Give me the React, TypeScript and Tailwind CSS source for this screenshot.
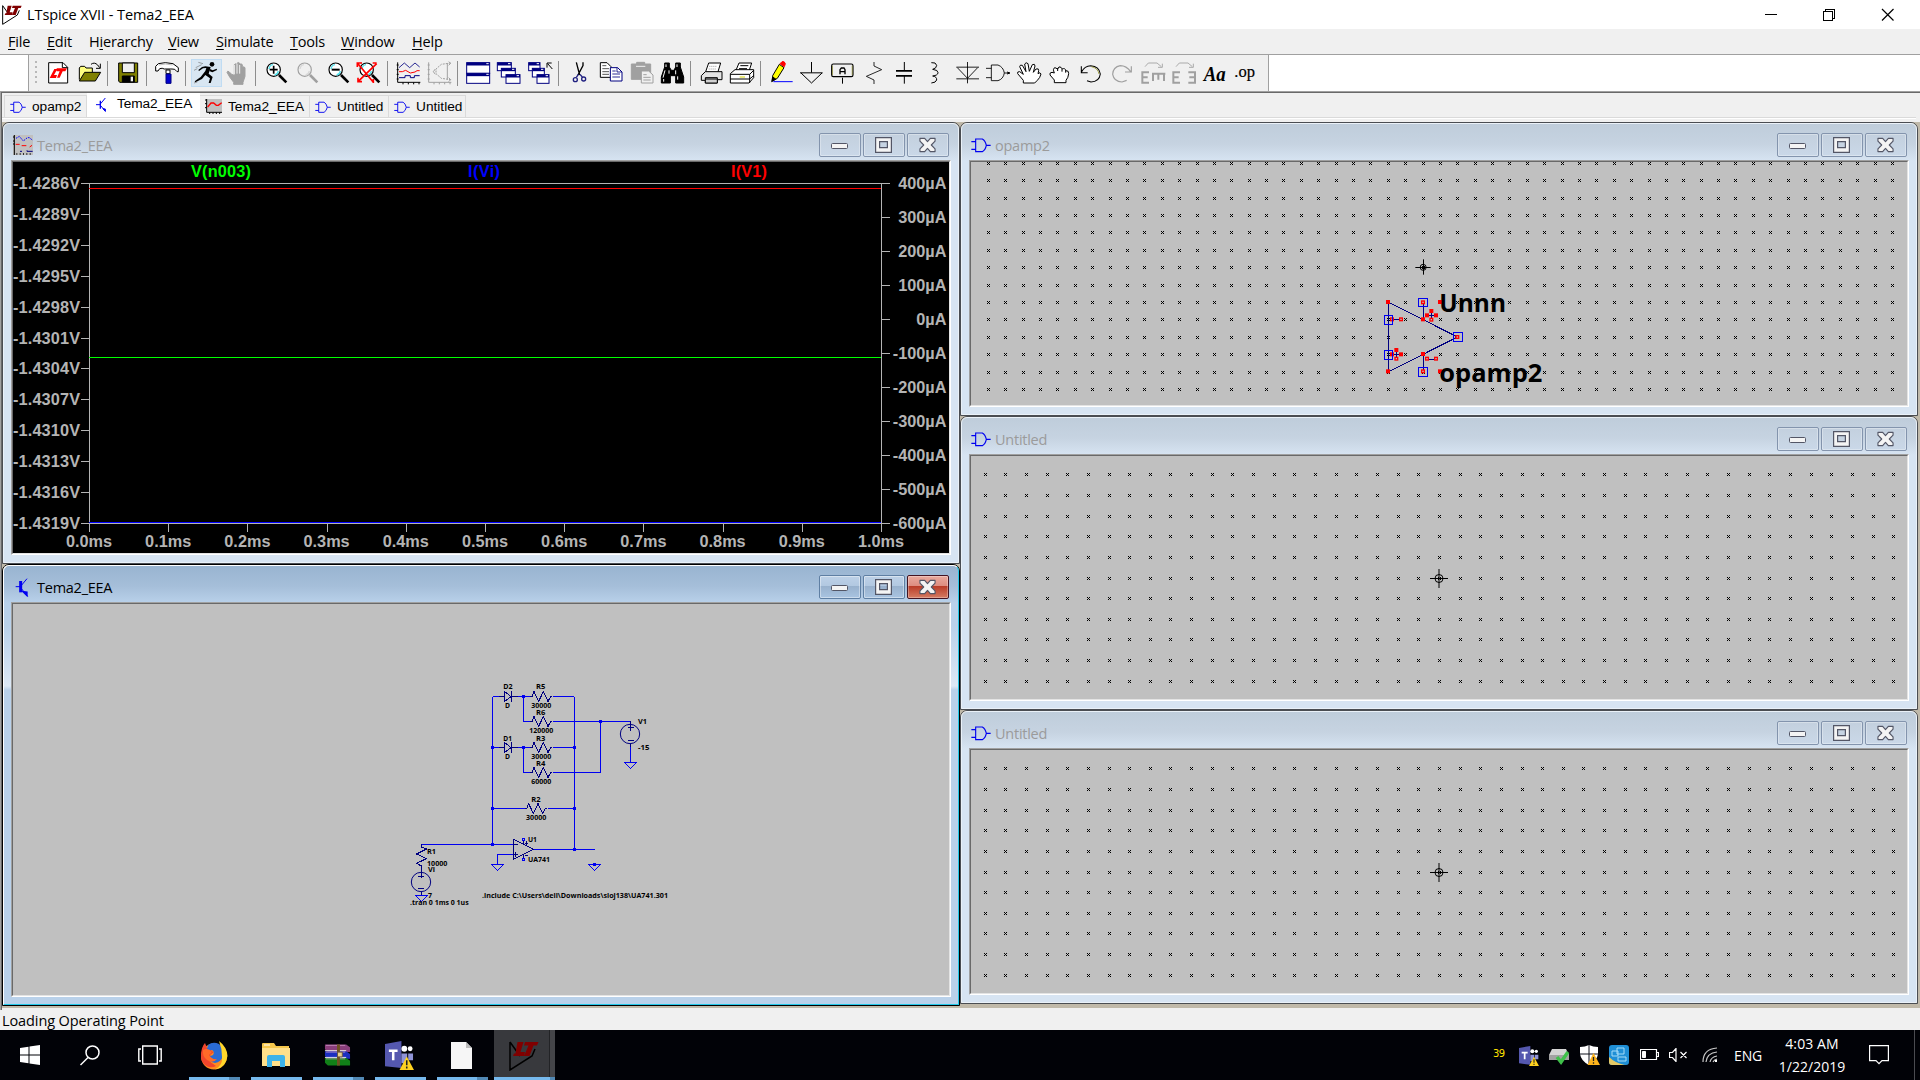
import React from "react";

type Kids = { children?: React.ReactNode };

/* ---------- toolbar ---------- */

const Btn = ({ children, hot }: Kids & { hot?: boolean }) => (
  <div className={hot ? "h-7 w-[31px] shrink-0 bg-[#d8e6f2] outline outline-1 -outline-offset-1 outline-[#c0dcf3]" : "h-7 w-[31px] shrink-0"}>
    <svg width="31" height="28" viewBox="0 0 93 84" fill="none" stroke="#000" strokeWidth="3">
      {children}
    </svg>
  </div>
);

const Sep = () => (
  <div className="h-7 w-2 shrink-0 pl-0.5 pt-0.5">
    <div className="h-[25px] w-px bg-[#8d8d8d]" />
  </div>
);

const Mag = ({ c = "#000", glass = "#fff", children }: Kids & { c?: string; glass?: string }) => (
  <>
    <circle cx="38" cy="32" r="20" stroke={c} fill={glass} strokeWidth="3.500" />
    <path d="M24 30q2-12 12-13M52 36q-2 10-11 12" stroke={c === "#000" ? "#4fe3ee" : "#d8d8d8"} strokeWidth="4" />
    <path d="M54 48L76 70" stroke={c} strokeWidth="8" />
    {children}
  </>
);

const MiniWin = ({ x, y, w = 45, h = 32 }: { x: number; y: number; w?: number; h?: number }) => (
  <g stroke="#000080">
    <rect x={x} y={y} width={w} height={h} fill="#fff" />
    <path d={`M${x} ${y + 4}h${w}`} strokeWidth="9" />
    <path d={`M${x + w - 10} ${y + 3}h7`} stroke="#fff" />
  </g>
);

const HandPath = "M27 46l-8-8q-5-3-6 2l8 14 12 16v6h28v-6l6-18V26q-4-5-8 0v14V17q-4-5-8 0v22V13q-4-5-8 0v26V17q-4-5-8 0v32z";

const Toolbar = () => (
  <div className="flex h-[37px] border-t border-[#a0a0a0] bg-white">
    <div className="ml-7 flex h-9 w-[1241px] items-start border-x border-[#a0a0a0] bg-[#f0f0f0] pt-1">
      <div className="flex h-7 w-[14px] shrink-0 flex-col gap-[3px] pl-[6px] pt-0.5">
        {[0, 1, 2, 3, 4].map((i) => (
          <div key={i} className="size-0.5 bg-[#b8b8b8]" />
        ))}
      </div>
      <Btn>
        <path d="M17 11h43l14 14v47H17z" fill="#fff" />
        <path d="M58 11v15h16" />
        <path d="M20 57l14-27h9l-10 18h9l-3 9zM41 28h31l-5 9h-8l-9 19h-8l8-19h-9z" fill="#f00" stroke="none" />
      </Btn>
      <Btn>
        <path d="M16 62V27l4-5h12l4 5h19v12" fill="#ffff80" />
        <path d="M16 66l16-26h48L64 66z" fill="#808000" />
        <path d="M51 16q10-8 20 2l6 8M79 14v14H66" />
      </Btn>
      <Sep />
      <Btn>
        <path d="M17 12h57v58H20l-3-4z" fill="#808000" />
        <path d="M28 12h36v29H28z" fill="#f0f0f0" />
        <path d="M28 51h36v18H28z" fill="#000" />
        <path d="M53 53h7v14h-7z" fill="#f0f0f0" stroke="none" />
      </Btn>
      <Sep />
      <Btn>
        <path d="M11 36V22l8-8q20-6 44 0l16 12v12h-4q-6-10-15-8H37q-6-4-14-1l-5 7z" fill="#fff" />
        <path d="M20 18q20-6 42 0" stroke="#c0c0c0" />
        <path d="M42 33h12v11H42z" fill="#fff" />
        <path d="M42 45h15v28H42z" fill="#0000d0" stroke="#000080" />
      </Btn>
      <Sep />
      <Btn hot>
        <g stroke="none" fill="#000">
          <circle cx="63" cy="16" r="7" />
          <path d="M43 22l16 2-6 20 12 10-6 18h-6l4-14-14-10-10 12-20 10-2-3 18-13 14-18 3-9-10 1-12 8-2-3 11-9z" />
          <path d="M57 30l8 4 12-5 1 4-14 7-9-4z" />
        </g>
        <path d="M22 10l14 4M14 26l18-9M9 34l10-5M9 72l10-3" stroke="#777" strokeWidth="2" />
      </Btn>
      <Btn>
        <g transform="translate(2 0)">
          <path d={HandPath} fill="#a0a0a0" stroke="#a0a0a0" />
          <path d="M35 18v28M43 14v30M51 18v26" stroke="#f0f0f0" />
        </g>
      </Btn>
      <Sep />
      <Btn>
        <Mag><path d="M26 32h24M38 20v24" strokeWidth="5" /></Mag>
      </Btn>
      <Btn>
        <Mag c="#a0a0a0" glass="#f0f0f0" />
      </Btn>
      <Btn>
        <Mag><path d="M26 32h24" strokeWidth="6" /></Mag>
      </Btn>
      <Btn>
        <Mag />
        <path d="M10 12l48 58M68 14L12 68M10 24V12h14M56 12h12M12 56v12h12M58 60v12" stroke="#f00" strokeWidth="5" />
      </Btn>
      <Sep />
      <Btn>
        <path d="M14 10v60h68M11 18h6M11 32h6M11 46h6M11 60h6M30 70v6M46 70v6M62 70v6M78 70v6" />
        <path d="M18 26l16-14 16 14 16-14 14 12" stroke="#000080" strokeWidth="2.5" />
        <path d="M18 38h10l10-4 14 8 14-3 6-4h8" stroke="#f00" />
        <path d="M18 56h18v-6h16v6h12v-6h16" stroke="#000080" />
      </Btn>
      <Btn>
        <g stroke="#a0a0a0">
          <path d="M14 10v60h68M11 18h6M11 32h6M11 46h6M11 60h6M30 70v6M46 70v6M62 70v6M78 70v6" />
          <path d="M80 12L52 16 36 30v14l16 14 28 4" strokeDasharray="6 3" />
          <path d="M70 12v50M34 30l-6 8 6 8M74 8l6 5-6 6M74 56l6 6-6 6" />
        </g>
      </Btn>
      <Sep />
      <Btn>
        <MiniWin x={11} y={11} w={69} h={32} />
        <MiniWin x={11} y={43} w={69} h={30} />
      </Btn>
      <Btn>
        <MiniWin x={10} y={11} w={42} h={24} />
        <MiniWin x={22} y={28} w={42} h={26} />
        <MiniWin x={36} y={47} w={42} h={26} />
      </Btn>
      <Btn>
        <MiniWin x={11} y={11} w={34} h={24} />
        <MiniWin x={22} y={28} w={36} h={26} />
        <MiniWin x={36} y={47} w={36} h={26} />
        <path d="M82 30L68 14M66 26V12h14" />
      </Btn>
      <Sep />
      <Btn>
        <path d="M37 10l10 38M57 10v10L42 48" strokeWidth="4" />
        <circle cx="34" cy="62" r="6" stroke="#202080" strokeWidth="4" />
        <circle cx="59" cy="60" r="6" stroke="#202080" strokeWidth="4" />
        <path d="M43 46l-6 9M48 46l7 8" stroke="#202080" strokeWidth="4" />
      </Btn>
      <Btn>
        <path d="M16 11h20l12 12v32H16z" fill="#fff" />
        <path d="M22 20h12M22 29h20M22 38h20M22 46h20" strokeWidth="2" />
        <path d="M46 26h22l13 13v27H46z" fill="#fff" stroke="#000080" />
        <path d="M66 26v13h15M52 36h10M52 45h23M52 54h23" stroke="#000080" strokeWidth="2.500" />
      </Btn>
      <Btn>
        <path d="M16 15h58v46H16z" fill="#a0a0a0" stroke="#a0a0a0" />
        <path d="M32 10h24v8H32z" fill="#a0a0a0" stroke="#a0a0a0" />
        <path d="M30 22h28" stroke="#f0f0f0" />
        <path d="M46 36h22l13 12v24H46z" fill="#f0f0f0" stroke="#a0a0a0" />
        <path d="M52 47h10M52 55h22M52 63h22" stroke="#a0a0a0" />
      </Btn>
      <Btn>
        <path d="M13 72V54l10-30V12h14v12l6 10h8l5-10V12h14v12l10 30v18H56V50H40v22z" fill="#000" />
        <path d="M27 16v8M60 16v8M24 34l-6 22M56 34v12M36 34v10M62 52v10M20 60v8" stroke="#fff" />
      </Btn>
      <Sep />
      <Btn>
        <path d="M29 38L38 12h36l-8 26" fill="#fff" />
        <path d="M16 50l12-12h50v24H64v10H28v-8H16z" fill="#e4e4e4" />
        <path d="M28 60h36M28 72h36V56H28z" fill="#d0d0d0" />
        <path d="M40 22h24M38 30h24" stroke="#999" strokeDasharray="3 3" />
      </Btn>
      <Btn>
        <path d="M26 36l10-24h38l-8 24" fill="#fff" />
        <path d="M40 20h24M36 29h24" />
        <path d="M10 44l14-12h56v24L66 72H10z" fill="#fff" />
        <path d="M10 46h58v26M68 46l12-12M10 60h58l12-10" />
        <path d="M38 54h16" stroke="#d8d800" />
      </Btn>
      <Sep />
      <Btn>
        <path d="M20 50L40 16l14 10-20 32-14 8z" fill="#ff0" />
        <path d="M42 14l6-6q8-2 10 6l-3 9z" fill="#f00" stroke="#f00" />
        <path d="M17 68l3-14 9 6z" fill="#000" />
        <path d="M22 68h58" stroke="#00f" />
      </Btn>
      <Btn>
        <path d="M43.500 9v32M9 41.500h68M12 42l31.500 30L75 42" />
      </Btn>
      <Btn>
        <rect x="11" y="15" width="64" height="38" rx="5" fill="#f0f0f0" strokeWidth="3.500" />
        <path d="M43.500 56v18" />
        <path d="M13.500 20v28M72.500 20v28" stroke="#808000" strokeWidth="1.500" />
        <path d="M36 46V32l4-5h8l3 5v14M36 38h15" strokeWidth="4" />
      </Btn>
      <Btn>
        <path d="M45 9v12L68 32 22 52l23 11v12" strokeWidth="2.500" />
      </Btn>
      <Btn>
        <path d="M18 35.500h48M18 50.500h48" strokeWidth="5" />
        <path d="M43 9v26M43 50v24" strokeWidth="3" />
      </Btn>
      <Btn>
        <path d="M31 11q14-2 16 8 0 9-12 12 17 2 16 10 0 8-16 10 13 2 12 12-2 8-16 9" />
      </Btn>
      <Btn>
        <path d="M46.500 9v64M13 24.500h68M13 59.500h68M16 26l30.500 32L77 26" strokeWidth="2.600" />
      </Btn>
      <Btn>
        <path d="M25 18h20q16 6 19 24-3 18-19 23H25zM9 28h16M9 56h16M64 42h14" strokeWidth="2.600" />
        <path d="M72 39l9 3-9 3" strokeWidth="3" />
      </Btn>
      <Btn>
        <path d="M28 73V65L11 45q-2-7 6-6l11 8-11-23q1-7 8-4l11 19-4-23q4-7 10-1l4 23 9-20q8-4 8 4l-5 19 8-10q9-3 8 5l-2 9q7-6 9 1-3 12-11 19l-8 8z" transform="translate(0 -1)" fill="#fff" />
      </Btn>
      <Btn>
        <path d="M28 71V63L15 48q-2-8 6-8l7 2q-6-14 2-16l8 4q3-10 10-5l4 5q9-4 10 5 10-1 9 9-1 12-8 20v7z" fill="#fff" />
        <path d="M38 27v9M51 29v9M62 34v7" />
      </Btn>
      <Btn>
        <path d="M16 22v19h19M16 40q10-20 28-20 26 2 29 25-3 23-28 24l-12-4" strokeWidth="3.2" />
        <path d="M46 23q20 4 23 22" stroke="#808000" strokeWidth="2" />
      </Btn>
      <Btn>
        <path d="M73 22v17H54M71 38Q58 20 40 20 18 24 17 46q4 22 28 23l14-5" stroke="#a0a0a0" strokeWidth="3.500" />
      </Btn>
      <Btn>
        <path d="M13 74V37M13 40h20M13 55h16M13 71h20M42 44h40M45 44v22M61 44v18M78 44v22" stroke="#a0a0a0" strokeWidth="6" />
        <path d="M21 23l10-11h26l13 11M73 14v11H60" stroke="#a0a0a0" strokeWidth="2.600" />
      </Btn>
      <Btn>
        <path d="M13 74V37M13 40h20M13 55h16M13 71h20M78 74V37M78 40H58M78 55H61M78 71H58" stroke="#a0a0a0" strokeWidth="6" />
        <path d="M21 23l10-11h26l13 11M73 14v11H60" stroke="#a0a0a0" strokeWidth="2.600" />
      </Btn>
      <Btn>
        <text x="11" y="66" fontFamily="Liberation Serif" fontSize="66" fontWeight="bold" fontStyle="italic" fill="#000" stroke="none" textLength="66" lengthAdjust="spacingAndGlyphs">Aa</text>
      </Btn>
      <Btn>
        <text x="10" y="54" fontFamily="Liberation Serif" fontSize="52" fill="#000" stroke="#000" strokeWidth="0.6" textLength="62" lengthAdjust="spacingAndGlyphs">.op</text>
      </Btn>
    </div>
  </div>
);

/* ---------- small symbols ---------- */

const GateIcon = ({ w = 20, h = 20 }: { w?: number; h?: number }) => (
  <svg width={w} height={h} viewBox="0 0 60 60" preserveAspectRatio="none" fill="none" stroke="#0000f0" strokeWidth="3.4" className="shrink-0">
    <path d="M14 12h20q9 5 12 19-3 14-12 19H14zM1 20h13M1 43h13M46 31h13" />
  </svg>
);

const BjtIcon = ({ bold }: { bold?: boolean }) => (
  <svg width="16" height="20" viewBox="0 0 48 60" fill="none" stroke="#0000f0" strokeWidth={bold ? 4 : 3} className="shrink-0">
    {bold ? (
      <>
        <path d="M8 29h14M22 29l20-24M22 31l22 27" strokeWidth="3" />
        <path d="M23 12v34" strokeWidth="9" />
        <path d="M30 44l12 12v-11z" fill="#0000f0" />
      </>
    ) : (
      <>
        <path d="M3 32h14M17 29l14-17M17 35l14 17" strokeWidth="3" />
        <path d="M16 20v24" strokeWidth="4" />
        <path d="M24 44l7 8v-7z" fill="#0000f0" />
      </>
    )}
  </svg>
);

const PlotIcon = ({ small }: { small?: boolean }) =>
  small ? (
    <svg width="17" height="15" viewBox="0 0 51 45" fill="none" className="shrink-0">
      <rect x="4" width="47" height="40" fill="#c0c0c0" />
      <path d="M5 0v40h46M0 3h5M0 14h5M0 26h5M14 40v5M24 40v5M34 40v5M44 40v5" stroke="#000" strokeWidth="3" />
      <path d="M8 24L18 12h8l8 7h6l10-8" stroke="#f00" strokeWidth="4" />
    </svg>
  ) : (
    <svg width="20" height="20" viewBox="0 0 60 60" fill="none" className="shrink-0">
      <rect width="60" height="60" fill="#c0c0c0" />
      <path d="M4 0v60M0 6h4M0 18h4M0 27h4" stroke="#000" strokeWidth="3" />
      <path d="M10 57h50" stroke="#000" strokeWidth="5" strokeDasharray="3 7" />
      <path d="M9 10l10-6 12 14 12-10h6l10 8" stroke="#00f" strokeWidth="3" strokeDasharray="5 3" />
      <path d="M8 28h12M26 32h14M50 36l7-5" stroke="#f00" strokeWidth="3" />
      <path d="M21 49h6M42 49h17M42 46v3" stroke="#000080" strokeWidth="3" />
    </svg>
  );

const LtLogo = ({ w, h, dark }: { w: number; h: number; dark?: boolean }) => (
  <svg width={w} height={h} viewBox="0 0 60 60" preserveAspectRatio="none" fill="none" className="shrink-0">
    {dark ? null : <path d="M2 3l5 1 20 27 26-17L4 59z" fill="#fff" />}
    <path d="M2 2v56l44-28 6-14M2 2l20 28" stroke="#000" strokeWidth="3" />
    <path d="M17 2h12l-6 20h9l-2 8H8l2-5h3zM32 2h27l-3 7h-7l-8 21H30l9-21h-9z" fill="#800000" />
  </svg>
);

/* ---------- MDI child window ---------- */

const CtlFace = {
  off: "flex h-6 w-[42px] items-center justify-center rounded-[2px] border border-[#8394ad] bg-gradient-to-b from-[#c3d0de] to-[#cad8e8] pr-px outline outline-1 -outline-offset-2 outline-white/30",
  on: "flex h-6 w-[42px] items-center justify-center rounded-[2px] border border-[#5f7fa3] bg-[linear-gradient(#bdd1e7_0%,#b2c8e1_45%,#98b1cd_46%,#a9c4e1_100%)] pr-px outline outline-1 -outline-offset-2 outline-white/40",
  red: "flex h-6 w-[42px] items-center justify-center rounded-[2px] border border-[#431422] bg-[linear-gradient(#e9a99d_0%,#dd8d80_45%,#b93b27_46%,#d57c63_100%)] pr-px outline outline-1 -outline-offset-2 outline-white/30",
};

const Controls = ({ active }: { active?: boolean }) => (
  <div className="mr-0.5 mt-[9px] flex gap-0.5">
    <div className={active ? CtlFace.on : CtlFace.off}>
      <svg width="17" height="20" viewBox="0 0 17 20"><rect x="0.500" y="8.500" width="16" height="5" rx="1" fill="#f4f4f4" stroke="#535666" /></svg>
    </div>
    <div className={active ? CtlFace.on : CtlFace.off}>
      <svg width="17" height="16" viewBox="0 0 17 16">
        <path d="M0.600 0.600h15.800v14.800H0.600zM4.600 4.600v6h7.800v-6z" fill="#f4f4f4" fillRule="evenodd" stroke="#535666" strokeWidth="1.200" />
      </svg>
    </div>
    <div className={active ? CtlFace.red : CtlFace.off}>
      <svg width="17" height="16" viewBox="0 0 18 16">
        <path d="M1 1h5l3 3.500L12 1h5v3l-4 4 4 4v3h-5l-3-3.500L6 15H1v-3l4-4-4-4z" fill="#f4f4f4" stroke="#535666" strokeWidth="1.2" strokeLinejoin="round" />
      </svg>
    </div>
  </div>
);

const Win = ({ title, icon, active, gap, children }: Kids & { title: string; icon: React.ReactNode; active?: boolean; gap: string }) => (
  <div
    className={
      active
        ? "flex w-[958px] flex-1 flex-col rounded-t-[7px] border border-black"
        : "flex w-[958px] flex-1 flex-col rounded-t-[7px] border border-[#4a4d52]"
    }
  >
    <div
      className={
        active
          ? "flex flex-1 flex-col rounded-t-[6px] border border-b-[#22c8e8] border-l-white border-r-[#22c8e8] border-t-white bg-[linear-gradient(#99b4d1_0px,#a5bed9_20px,#b9d1ea_37px,#b9d1ea_60px,#dce8f5_120px,#b9d1ea_124px)] px-[7px] pb-[7px]"
          : "flex flex-1 flex-col rounded-t-[6px] border border-[#eaf1f8] bg-[linear-gradient(#bfcddb_0px,#c6d3e1_20px,#d7e4f2_37px,#d7e4f2_100%)] px-[7px] pb-[7px]"
      }
    >
      <div className="flex h-9 justify-between">
        <div className={`flex h-9 items-start pl-0.5 pt-[11px] ${gap}`}>
          {icon}
          <span className={active ? "pt-px font-['Open_Sans'] text-[14.500px] leading-5 tracking-[-0.25px] text-black" : "pt-px font-['Open_Sans'] text-[14.500px] leading-5 tracking-[-0.25px] text-[#9b9b9b]"}>{title}</span>
        </div>
        <Controls active={active} />
      </div>
      <div className="flex flex-1 border border-b-[#fff] border-l-[#a0a0a0] border-r-[#fff] border-t-[#a0a0a0]">
        <div className="flex flex-1 overflow-hidden border border-b-[#e3e3e3] border-l-[#696969] border-r-[#e3e3e3] border-t-[#696969] bg-[#c0c0c0]">{children}</div>
      </div>
    </div>
  </div>
);

/* ---------- waveform viewer ---------- */

const vLabels = ["-1.4286V", "-1.4289V", "-1.4292V", "-1.4295V", "-1.4298V", "-1.4301V", "-1.4304V", "-1.4307V", "-1.4310V", "-1.4313V", "-1.4316V", "-1.4319V"];
const iLabels = ["400µA", "300µA", "200µA", "100µA", "0µA", "-100µA", "-200µA", "-300µA", "-400µA", "-500µA", "-600µA"];

const Plot = () => (
  <svg width="936" height="391" viewBox="13 162 936 391" className="bg-black" fontFamily="Liberation Sans" fontWeight="bold" fontSize="16.3" fill="#b4b4b4">
    <g shapeRendering="crispEdges" stroke="#b4b4b4" strokeWidth="1" fill="none">
      <path d="M81 183.500H890M81 523.500H890M89.500 183V532M881.500 183V532" />
      {vLabels.map((l, i) => (
        <path key={l} d={`M81 ${Math.round(183 + 30.9 * i) + 0.5}h9`} />
      ))}
      {iLabels.map((l, i) => (
        <path key={l} d={`M881 ${183 + 34 * i + 0.5}h9`} />
      ))}
      {iLabels.map((l, i) => (
        <path key={l} d={`M${Math.round(89 + 79.2 * i) + 0.5} 523v9`} />
      ))}
      <path d="M89 188.500H881" stroke="#f00" />
      <path d="M89 357.500H881" stroke="#0f0" />
      <path d="M89 522.500H881" stroke="#00f" />
    </g>
    <text x="191" y="177" fill="#0f0" textLength="60">V(n003)</text>
    <text x="468" y="177" fill="#00f" textLength="32">I(Vi)</text>
    <text x="731" y="177" fill="#f00" textLength="36">I(V1)</text>
    {vLabels.map((l, i) => (
      <text key={l} x="13" y={189 + Math.round(30.9 * i)} textLength="67">{l}</text>
    ))}
    {iLabels.map((l, i) => (
      <text key={l} x="946.5" y={189 + 34 * i} textAnchor="end">{l}</text>
    ))}
    {iLabels.map((l, i) => (
      <text key={l} x={89 + 79.2 * i} y="547" textAnchor="middle">{(i / 10).toFixed(1)}ms</text>
    ))}
  </svg>
);

/* ---------- schematic ---------- */

const T = ({ x, y, w, s = 21, children }: { x: number; y: number; w: number; s?: number; children: string }) => (
  <text x={x} y={y} fontSize={s} textLength={w} lengthAdjust="spacingAndGlyphs">{children}</text>
);

const Res = ({ x, y }: { x: number; y: number }) => (
  <path d={`M${x} ${y}h5l6-15 14 30 14-30 14 30 8-15h5`} stroke="#000080" />
);
const Gnd = ({ x, y }: { x: number; y: number }) => <path d={`M${x - 17} ${y}h34l-17 18z`} />;
const Node = ({ x, y }: { x: number; y: number }) => <rect x={x - 4.5} y={y - 4.5} width="9" height="9" fill="#0000f0" shapeRendering="crispEdges" />;
const Diode = ({ x, y }: { x: number; y: number }) => (
  <path d={`M${x} ${y}h15v-16l21 16-21 16v-16M${x + 36} ${y - 16}v32M${x + 36} ${y}h22`} stroke="#000080" />
);

const Schematic = () => (
  <svg width="936" height="391" viewBox="-1131 -198 2808 1173">
    <g fill="none" stroke="#0000f0" strokeWidth="3" shapeRendering="crispEdges">
      <path d="M307.500 79.500v444M553.500 79.500v459M307.500 79.500h20M307.500 232.500h20M400.500 79.500v75h20M400.500 232.500v75h20M385 79.500h36M385 232.500h36" />
      <path d="M490 79.500h63M490 154.500h231M490 232.500h63M490 307.500h141v-153M307.500 415.500h100M474 415.500h80M94.500 523.500h276M430 538.500h185M370 553.500h-48v30" />
      <path d="M721.500 225v52" />
      <Res x={421} y={79.5} />
      <Res x={421} y={154.5} />
      <Res x={421} y={232.5} />
      <Res x={421} y={307.5} />
      <Res x={405} y={415.5} />
      <Diode x={327} y={79.5} />
      <Diode x={327} y={232.5} />
      <Gnd x={721.5} y={277.5} />
      <Gnd x={322.5} y={583.5} />
      <Gnd x={613.5} y={583.5} />
      <Gnd x={94.5} y={676.5} />
      <g stroke="#000080">
        <path d="M94.500 523v8l15 6-30 15 30 14-30 14 15 8v14" />
        <path d="M370.500 508v60l60-30zM370 523.500h13M370 553.500h13M376.500 547v13M400.500 514v9M400.500 553v10M404 519h9M408.500 513v12M404 556h9" />
        <path d="M721.500 154v28M713 172.500h18M713 211.500h18M721.500 221v10M94.500 595v30M85 618.500h18M85 656.500h18M94.500 665v10" />
        <circle cx="720" cy="192" r="29" shapeRendering="auto" />
        <circle cx="93" cy="636" r="29" shapeRendering="auto" />
      </g>
      <rect x="397.500" y="505.500" width="6" height="6" />
      <rect x="397.500" y="565.500" width="6" height="6" />
    </g>
    {[[400, 79], [400, 232], [307, 232], [553, 232], [631, 154], [307, 415], [553, 415], [307, 523], [553, 538], [614, 583]].map(([x, y]) => (
      <Node key={`${x}-${y}`} x={x + 0.5} y={y + 0.5} />
    ))}
    <g fontFamily="Open Sans" fontWeight="bold" fill="#000">
      <T x={340} y={57} w={28}>D2</T>
      <T x={438} y={57} w={28}>R5</T>
      <T x={345} y={113} w={15}>D</T>
      <T x={424} y={113} w={60}>30000</T>
      <T x={438} y={135} w={28}>R6</T>
      <T x={418} y={188} w={72}>120000</T>
      <T x={744} y={162} w={27}>V1</T>
      <T x={340} y={213} w={26}>D1</T>
      <T x={438} y={213} w={28}>R3</T>
      <T x={744} y={240} w={34}>-15</T>
      <T x={345} y={267} w={15}>D</T>
      <T x={424} y={267} w={60}>30000</T>
      <T x={438} y={288} w={28}>R4</T>
      <T x={424} y={342} w={60}>60000</T>
      <T x={424} y={396} w={28}>R2</T>
      <T x={408} y={450} w={61}>30000</T>
      <T x={414} y={516} w={27}>U1</T>
      <T x={414} y={576} w={66}>UA741</T>
      <T x={111} y={552} w={27}>R1</T>
      <T x={111} y={588} w={61}>10000</T>
      <T x={114} y={606} w={21}>Vi</T>
      <T x={114} y={684} w={12}>7</T>
      <T x={60} y={704} w={176}>.tran 0 1ms 0 1us</T>
      <T x={276} y={684} w={558}>.include C:\Users\dell\Downloads\sloj138\UA741.301</T>
    </g>
  </svg>
);

/* ---------- symbol editor ---------- */

const gridPath = (x0: number, y0: number, step: number, cols: number, rows: number) => {
  let d = "";
  for (let r = 0; r < rows; r++) {
    for (let c = 0; c < cols; c++) {
      const x = Math.floor(x0 + step * c) - 1;
      const y = Math.floor(y0 + step * r) - 1;
      d += `M${x} ${y}h1v1h-1zM${x + 2} ${y}h1v1h-1zM${x + 1} ${y + 1}h1v1h-1zM${x} ${y + 2}h1v1h-1zM${x + 2} ${y + 2}h1v1h-1z`;
    }
  }
  return d;
};
const fineGrid = gridPath(988.4, 163.4, 17.385, 53, 14);
const wideGrid = gridPath(985.1, 474.75, 20.65, 45, 11);

const Sq = ({ x, y, hollow }: { x: number; y: number; hollow?: boolean }) => (
  <>
    <rect x={x - 6} y={y - 6} width="12" height="12" fill="#f00" />
    {hollow ? <rect x={x - 2} y={y - 2} width="4" height="4" fill="#c0c0c0" /> : null}
  </>
);

const Opamp = () => (
  <svg width="936" height="243" viewBox="971 162 936 243">
    <path d={fineGrid} shapeRendering="crispEdges" />
    <g transform="translate(1340 240) scale(0.33333333)">
      <g fill="none" stroke="#000080" strokeWidth="3" shapeRendering="crispEdges">
        <path d="M145.500 187v208l207-104zM249.500 187v52M249.500 343v52M157 238.500h26M157 343.500h26M169.500 331v24M261 226.500h27M274.500 214v24M261 357.500h27" />
      </g>
      <Sq x={144} y={186} />
      <Sq x={249} y={238} />
      <Sq x={300} y={186} />
      <Sq x={144} y={394} />
      <Sq x={249} y={342} />
      <Sq x={300} y={394} />
      <Sq x={249} y={187} hollow />
      <Sq x={352} y={291} hollow />
      <Sq x={249} y={394} hollow />
      <Sq x={156} y={238} hollow />
      <Sq x={183} y={238} hollow />
      <Sq x={274} y={213} />
      <Sq x={261} y={226} />
      <Sq x={288} y={226} />
      <Sq x={274} y={239} hollow />
      <Sq x={169} y={330} />
      <Sq x={156} y={343} />
      <Sq x={183} y={343} />
      <Sq x={169} y={356} hollow />
      <Sq x={261} y={356} hollow />
      <Sq x={288} y={356} hollow />
      <g fill="none" stroke="#0000f0" strokeWidth="3" shapeRendering="crispEdges">
        {[[249, 187], [145, 240], [354, 291], [145, 345], [249, 396]].map(([x, y]) => (
          <rect key={`${x}-${y}`} x={x - 12.5} y={y - 12.5} width="25" height="25" />
        ))}
      </g>
      <g fill="none" stroke="#000" strokeWidth="3">
        <path d="M226 82.500h46M250.500 58v46" />
        <circle cx="249.500" cy="82" r="9" />
      </g>
      <g fontFamily="Open Sans" fontWeight="bold" fontSize="76" fill="#000">
        <text x="298" y="216" textLength="200" lengthAdjust="spacingAndGlyphs">Unnn</text>
        <text x="298" y="425" textLength="309" lengthAdjust="spacingAndGlyphs">opamp2</text>
      </g>
    </g>
  </svg>
);

const EmptySheet = () => (
  <svg width="936" height="243" viewBox="971 456 936 243">
    <path d={wideGrid} shapeRendering="crispEdges" />
    <path d="M1430 578.500h18M1439 569v19" stroke="#000" />
    <circle cx="1439" cy="578.500" r="4" fill="none" stroke="#000" />
  </svg>
);

/* ---------- taskbar ---------- */

const TeamsIcon = ({ s }: { s: number }) => (
  <svg width={s} height={s} viewBox="0 0 30 30">
    <path d="M0 3L17 0v28L0 26z" fill="#5558af" />
    <path d="M4 10h9M8.500 10v10" stroke="#fff" strokeWidth="2.600" />
    <circle cx="20" cy="8" r="3" fill="#fff" />
    <circle cx="26" cy="8" r="2.500" fill="#fff" />
    <path d="M17 13h6v10h-6zM24 13h5v7h-5z" fill="#8f93d6" />
    <path d="M22.500 16L30 30H15z" fill="#ffd21f" />
    <path d="M22.500 20v5M22.500 26.500v2" stroke="#222" strokeWidth="1.600" />
  </svg>
);

const Task = ({ children, split, left }: Kids & { split?: boolean; left: string }) => (
  <div className={`flex h-[50px] w-[51px] flex-col justify-between ${left}`}>
    <div className="flex h-[47px] items-center justify-center pr-[2px] pt-[3px]">{children}</div>
    <div className="flex h-[3px]">
      <div className="flex-1 bg-[#76b9ed]" />
      {split ? <div className="w-[11px] bg-[#5289b5]" /> : null}
    </div>
  </div>
);

const Taskbar = () => (
  <div className="flex h-[50px] justify-between bg-[#010207]">
    <div className="flex">
      <div className="flex h-[50px] w-[189px] items-center">
        <svg width="20" height="20" viewBox="0 0 20 20" className="ml-5" fill="#fff">
          <path d="M0 3l8.500-1.300v7.800H0zM9.500 1.500L20 0v9.500H9.500zM0 10.500h8.500v7.800L0 17zM9.500 10.500H20V20L9.500 18.500z" />
        </svg>
        <svg width="21" height="21" viewBox="0 0 21 21" className="ml-10" fill="none" stroke="#fff" strokeWidth="1.500">
          <circle cx="12.500" cy="7.500" r="6.500" />
          <path d="M8 12.500L0.500 20" />
        </svg>
        <svg width="24" height="20" viewBox="0 0 24 20" className="ml-[37px]" fill="none" stroke="#fff" strokeWidth="1.400">
          <path d="M4.700 1h14.600v18H4.700zM3 4H0.800v12H3M21 4h2.200v12H21" />
        </svg>
      </div>
      <Task split left="">
        <svg width="28" height="29" viewBox="0 0 28 29">
          <circle cx="14" cy="15.500" r="13" fill="#ff8a1f" />
          <path d="M1 15Q1 6 5 2l2 5 3-1q0 4 4 5l-4 3q3 4 6 3-2 4-7 3l7 5q-6 3-11-1Q1 21 1 15z" fill="#f0452c" />
          <path d="M8 4Q13 0 19 3q5 5 4 12-2 6-8 7-6-1-7-6l5-2q2-3-1-5-3 1-5-1z" fill="#2a6bd4" />
          <path d="M19 0q8 6 8.500 15Q26 27 15 28.500q8-4 7-13 0-8-3-15.500z" fill="#ffd62b" />
          <path d="M3 9q5-3 9 2l-3 3q3 5 8 4-4 5-10 1-5-4-4-10z" fill="#ff6a28" />
        </svg>
      </Task>
      <Task left="ml-[11px]">
        <svg width="28" height="24" viewBox="0 0 28 24">
          <path d="M0 1q0-1 1-1h11l2 3h13v20H0z" fill="#f5c74c" />
          <path d="M0 5h28v18H0z" fill="#ffe08a" />
          <path d="M2 2h6" stroke="#fff" />
          <path d="M5 24V14q0-2 2-2h14q2 0 2 2v10h-5v-6h-8v6z" fill="#3db3e9" />
        </svg>
      </Task>
      <Task split left="ml-[11px]">
        <svg width="27" height="24" viewBox="0 0 28 24">
          <path d="M1 1h22l4 3v5H4L1 6z" fill="#8a3f7c" />
          <path d="M1 8h22l4 3v5H4l-3-3z" fill="#1c2fc0" />
          <path d="M1 15h22l4 3v5H4l-3-3z" fill="#118018" />
          <path d="M2 2h20M2 9h20M2 16h20" stroke="#d9a6cf" strokeOpacity="0.7" />
          <path d="M1 7.500h22M1 14.500h22" stroke="#e8e8e8" />
          <path d="M15 1v22" stroke="#6e5222" strokeWidth="3" />
          <path d="M14 9h5v5h-5z" fill="#e8cf90" stroke="#654" />
        </svg>
      </Task>
      <Task left="ml-[11px]">
        <TeamsIcon s={29} />
      </Task>
      <Task split left="ml-[11px]">
        <svg width="21" height="27" viewBox="0 0 21 27">
          <path d="M0 0h15l6 6v21H0z" fill="#f6f6f6" />
          <path d="M15 0v6h6z" fill="#bbb" />
        </svg>
      </Task>
      <div className="ml-[6px] flex h-[50px] w-[61px] flex-col justify-between bg-[#38393d]">
        <div className="flex h-[47px]">
          <div className="flex w-[56px] items-center border-r border-[#222326] pl-[15px] pt-1">
            <LtLogo w={30} h={30} dark />
          </div>
          <div className="flex-1 bg-[#444549]" />
        </div>
        <div className="flex h-[3px]">
          <div className="w-[56px] bg-[#76b9ed]" />
          <div className="flex-1 bg-[#5289b5]" />
        </div>
      </div>
    </div>
    <div className="flex items-center font-['Open_Sans'] text-white">
      <span className="mb-1 w-[26px] font-['DejaVu_Sans'] text-[10px] tracking-[-0.5px] text-[#ffe100]">39</span>
      <div className="flex w-[30px] pt-[1px]"><TeamsIcon s={20} /></div>
      <svg width="20" height="20" viewBox="0 0 20 20" className="mr-[11px]">
        <path d="M3 4h14l3 6v5H0v-5z" fill="#d4d4d4" />
        <path d="M0 10h20v5H0z" fill="#a2a2a2" />
        <path d="M8 12l4 5 7-10" fill="none" stroke="#3fc04a" strokeWidth="3.500" />
      </svg>
      <svg width="20" height="20" viewBox="0 0 20 20" className="mr-[9px]">
        <path d="M9 0q4 2 9 2v7q-1 7-9 11-8-4-9-11V2q5 0 9-2z" fill="#fff" />
        <path d="M9 0v20M0 9h18" stroke="#10131c" />
        <path d="M13.500 8L20 20H7.500z" fill="#fdb41c" />
        <path d="M13.500 12v4M13.500 17.200v1.500" stroke="#222" strokeWidth="1.300" />
      </svg>
      <svg width="20" height="20" viewBox="0 0 20 20" className="mr-[11px]">
        <rect width="20" height="20" rx="3" fill="#1f8fd6" />
        <path d="M0 12q6 6 16 8H3q-3 0-3-3z" fill="#e5c865" />
        <path d="M3 6h6v5H3zM8 3h7v6H8zM9 12h8v4H9z" fill="none" stroke="#a5dcf8" />
      </svg>
      <svg width="19" height="12" viewBox="0 0 19 12" className="mr-[10px]" fill="none" stroke="#fff">
        <path d="M0.500 0.500h16v10h-16zM17 3.500h1.500v4H17" strokeWidth="1.200" />
        <path d="M2.500 2.500h3v6h-3z" fill="#fff" />
      </svg>
      <svg width="19" height="14" viewBox="0 0 19 14" className="mr-[14px]" fill="none" stroke="#fff" strokeWidth="1.200">
        <path d="M0.500 4.500h3l3.500-4v13l-3.500-4h-3zM11.500 4l6 6M17.500 4l-6 6" />
      </svg>
      <svg width="16" height="16" viewBox="0 0 16 16" className="mr-4" fill="none" stroke="#c8c8c8" strokeWidth="1.200">
        <path d="M1 15Q1 2 15 1M4 15Q5 6 15 5M8 15q1-5 7-6M11 15q1-2 4-3" />
        <path d="M13 13h2v2h-2z" fill="#fff" stroke="none" />
      </svg>
      <span className="w-[43px] text-[14px] tracking-[-0.1px]">ENG</span>
      <div className="flex w-[70px] flex-col items-center text-[14px] leading-[23px]">
        <span className="tracking-[0.1px]">4:03 AM</span>
        <span>1/22/2019</span>
      </div>
      <svg width="20" height="20" viewBox="0 0 20 20" className="ml-[22px]" fill="none" stroke="#fff" strokeWidth="1.200">
        <path d="M0.600 0.600h18.800v15H13l-3 3-3-3H0.600z" />
      </svg>
      <div className="ml-[25px] mr-[5px] h-[50px] w-px bg-[#4a4b50]" />
    </div>
  </div>
);

/* ---------- main ---------- */

const menu: [string, string, string, string][] = [
  ["", "F", "ile", "w-[39px]"],
  ["", "E", "dit", "w-[42px]"],
  ["H", "i", "erarchy", "w-[79px]"],
  ["", "V", "iew", "w-[48px]"],
  ["", "S", "imulate", "w-[74px]"],
  ["", "T", "ools", "w-[51px]"],
  ["", "W", "indow", "w-[71px]"],
  ["", "H", "elp", "w-[60px]"],
];

const Tab = ({ w, icon, label }: { w: string; icon: React.ReactNode; label: string }) => (
  <div className={`mt-[2px] flex h-[22px] items-center gap-1.5 border-r border-t border-[#dadada] pl-[5px] ${w}`}>
    {icon}
    <span className="pt-px">{label}</span>
  </div>
);

export default function App() {
  return (
    <div className="flex h-[1080px] w-[1920px] flex-col overflow-hidden bg-[#f0f0f0] text-black">
      <div className="flex h-[29px] shrink-0 items-center bg-white pl-[2px]">
        <LtLogo w={20} h={20} />
        <span className="ml-[5px] flex-1 font-['Open_Sans'] text-[14.500px] tracking-[-0.08px]">LTspice XVII - Tema2_EEA</span>
        <svg width="134" height="13" viewBox="0 0 134 13" className="mr-[26px]" fill="none" stroke="#000">
          <path d="M5 6.500h12" shapeRendering="crispEdges" />
          <path d="M63.500 3.500h9v9h-9zM65.500 3V1.500h9v9H73" shapeRendering="crispEdges" />
          <path d="M122 1l11.500 11.500M133.500 1L122 12.500" strokeWidth="1.200" />
        </svg>
      </div>
      <div className="flex h-[25px] shrink-0 items-center pl-2 font-['Open_Sans'] text-[14.500px] tracking-[-0.2px]">
        {menu.map(([a, b, c, w]) => (
          <span key={b + c} className={w}>
            {a}
            <span className="underline underline-offset-2">{b}</span>
            {c}
          </span>
        ))}
      </div>
      <Toolbar />
      <div className="flex h-[919px] shrink-0 flex-col border-l border-t border-[#a0a0a0]">
        <div className="flex flex-1 flex-col border-l border-t border-[#696969]">
          <div className="flex h-6 shrink-0 pl-0.5 font-['Liberation_Sans'] text-[13.700px]">
            <Tab w="w-[83px] border-l" icon={<GateIcon w={16} h={16} />} label="opamp2" />
            <div className="flex h-6 w-[113px] items-center gap-1.5 bg-white pb-0.5 pl-2">
              <BjtIcon />
              <span className="tracking-[-0.1px]">Tema2_EEA</span>
            </div>
            <Tab w="w-[110px]" icon={<PlotIcon small />} label="Tema2_EEA" />
            <Tab w="w-[79px]" icon={<GateIcon w={16} h={16} />} label="Untitled" />
            <Tab w="w-[77px]" icon={<GateIcon w={16} h={16} />} label="Untitled" />
          </div>
          <div className="mr-1 h-[2px] shrink-0 border-t border-[#dadada] bg-white" />
          <div className="h-[3px] shrink-0" />
          <div className="flex h-[886px] shrink-0 bg-[#c0b9a9]">
            <div className="flex h-[884px] w-[958px] flex-col">
              <Win title="Tema2_EEA" gap="gap-1" icon={<PlotIcon />}>
                <Plot />
              </Win>
              <Win title="Tema2_EEA" gap="gap-2" active icon={<BjtIcon bold />}>
                <Schematic />
              </Win>
            </div>
            <div className="flex h-[882px] w-[958px] flex-col">
              <Win title="opamp2" gap="gap-1" icon={<GateIcon />}>
                <Opamp />
              </Win>
              <Win title="Untitled" gap="gap-1" icon={<GateIcon />}>
                <EmptySheet />
              </Win>
              <Win title="Untitled" gap="gap-1" icon={<GateIcon />}>
                <EmptySheet />
              </Win>
            </div>
          </div>
        </div>
      </div>
      <div className="flex h-5 shrink-0 items-center pl-[2px] pt-px font-['Open_Sans'] text-[14.500px] tracking-[-0.1px]">Loading Operating Point</div>
      <Taskbar />
    </div>
  );
}
